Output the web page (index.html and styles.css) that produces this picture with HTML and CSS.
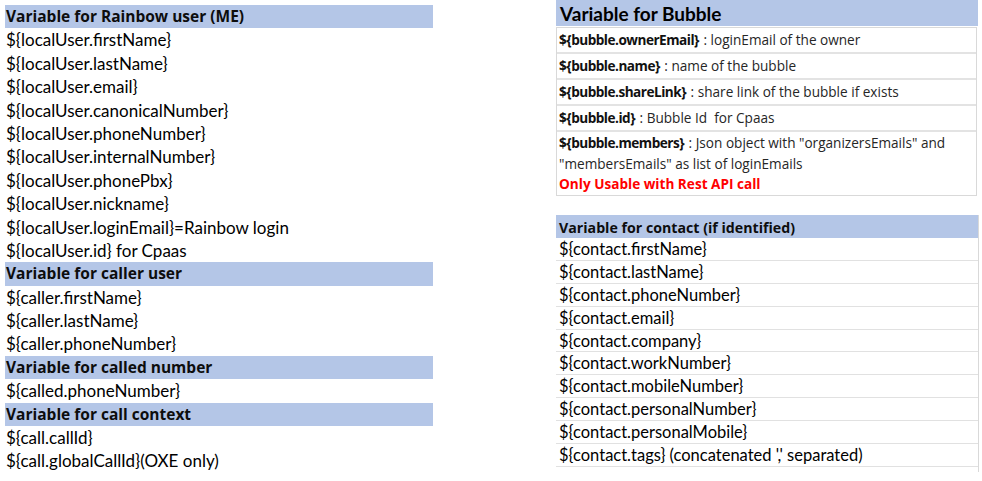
FILE: index.html
```html
<!DOCTYPE html>
<html>
<head>
<meta charset="utf-8">
<link rel="stylesheet" href="styles.css">
</head>
<body>
<div class="sheet">
  <div class="left">
    <div class="hrow">Variable for Rainbow user (ME)</div>
    <div class="row">${localUser.firstName}</div>
    <div class="row">${localUser.lastName}</div>
    <div class="row">${localUser.email}</div>
    <div class="row">${localUser.canonicalNumber}</div>
    <div class="row">${localUser.phoneNumber}</div>
    <div class="row">${localUser.internalNumber}</div>
    <div class="row">${localUser.phonePbx}</div>
    <div class="row">${localUser.nickname}</div>
    <div class="row">${localUser.loginEmail}=Rainbow login</div>
    <div class="row">${localUser.id} for Cpaas</div>
    <div class="hrow">Variable for caller user</div>
    <div class="row">${caller.firstName}</div>
    <div class="row">${caller.lastName}</div>
    <div class="row">${caller.phoneNumber}</div>
    <div class="hrow">Variable for called number</div>
    <div class="row">${called.phoneNumber}</div>
    <div class="hrow">Variable for call context</div>
    <div class="row">${call.callId}</div>
    <div class="row">${call.globalCallId}(OXE only)</div>
  </div>
  <div class="right">
    <div class="bhead">Variable for Bubble</div>
    <div class="btable">
      <div class="bcell"><b>${bubble.ownerEmail}</b> : loginEmail of the owner</div>
      <div class="bcell"><b>${bubble.name}</b> : name of the bubble</div>
      <div class="bcell"><b>${bubble.shareLink}</b> : share link of the bubble if exists</div>
      <div class="bcell"><b>${bubble.id}</b> : Bubble Id&nbsp; for Cpaas</div>
      <div class="bcell multi">
        <div class="bline"><b>${bubble.members}</b> : Json object with "organizersEmails" and</div>
        <div class="bline">"membersEmails" as list of loginEmails</div>
        <div class="bline red">Only Usable with Rest API call</div>
      </div>
    </div>
    <div class="contact">
      <div class="chead">Variable for contact (if identified)</div>
      <div class="crow">${contact.firstName}</div>
      <div class="crow">${contact.lastName}</div>
      <div class="crow">${contact.phoneNumber}</div>
      <div class="crow">${contact.email}</div>
      <div class="crow">${contact.company}</div>
      <div class="crow">${contact.workNumber}</div>
      <div class="crow">${contact.mobileNumber}</div>
      <div class="crow">${contact.personalNumber}</div>
      <div class="crow">${contact.personalMobile}</div>
      <div class="crow">${contact.tags} (concatenated ',' separated)</div>
    </div>
  </div>
</div>
</body>
</html>
```
FILE: styles.css
```css
html, body {
  margin: 0;
  padding: 0;
  background: #ffffff;
}
body {
  width: 982px;
  height: 481px;
  overflow: hidden;
  font-family: Lato, "Liberation Sans", sans-serif;
  color: #000;
}
.sheet {
  display: flex;
  align-items: flex-start;
}
.left {
  width: 428px;
  margin-left: 5px;
  padding-top: 5px;
}
.hrow, .row {
  height: 23.4px;
  line-height: 23.4px;
  font-size: 17px;
  white-space: nowrap;
  padding-left: 1px;
}
.hrow {
  background: #b4c6e7;
  font-family: "Open Sans", "Noto Sans", sans-serif;
  font-weight: bold;
  font-size: 15.5px;
  color: #0d0d0d;
}
.right {
  width: 422px;
  margin-left: 123px;
}
.bhead {
  height: 26px;
  line-height: 27px;
  background: #b4c6e7;
  font-weight: bold;
  font-size: 19px;
  padding-left: 4px;
}
.btable {
  margin-top: 1px;
  width: 419px;
  border: 1px solid #d9d9d9;
  font-family: "Open Sans", "Noto Sans", sans-serif;
  font-size: 13.6px;
  color: #262626;
}
.bcell {
  height: 24px;
  line-height: 24px;
  padding-left: 2px;
  border-bottom: 2px solid #e3e3e3;
  white-space: nowrap;
}
.bcell:last-child {
  border-bottom: none;
}
.bcell.multi {
  height: auto;
  padding-top: 1px;
}
.bline {
  height: 20.5px;
  line-height: 20.5px;
}
.bcell b {
  color: #111;
  letter-spacing: -0.5px;
  padding-right: 1px;
}
.red {
  color: #ff0000;
  font-weight: bold;
}
.contact {
  margin-top: 19px;
  width: 422px;
  border-right: 1px solid #d9d9d9;
  padding-bottom: 5px;
}
.chead {
  height: 23.5px;
  line-height: 26px;
  background: #b4c6e7;
  font-family: "Open Sans", "Noto Sans", sans-serif;
  font-weight: bold;
  font-size: 14.2px;
  color: #0d0d0d;
  padding-left: 3px;
  overflow: hidden;
}
.crow {
  height: 21.9px;
  line-height: 22px;
  border-bottom: 1px solid #e1e1e1;
  font-size: 16.5px;
  padding-left: 3px;
  white-space: nowrap;
}
```
